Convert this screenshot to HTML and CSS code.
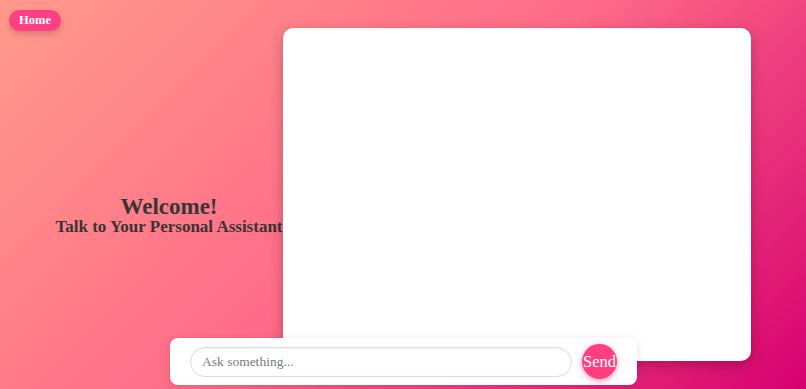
FILE: index.html
```html
<!DOCTYPE html>
<html lang="en">
<head>
<meta charset="utf-8">
<title>Personal Assistant</title>
<link rel="stylesheet" href="styles.css">
</head>
<body>
<a class="home-btn" href="#">Home</a>
<main class="layout">
  <section class="welcome">
    <h1 class="welcome-title">Welcome!</h1>
    <h2 class="welcome-sub">Talk to Your Personal Assistant</h2>
  </section>
  <section class="chat-box"></section>
</main>
<form class="input-bar">
  <input class="chat-input" type="text" placeholder="Ask something...">
  <button class="send-btn" type="button">Send</button>
</form>
</body>
</html>
```
FILE: styles.css
```css
html, body {
  margin: 0;
  padding: 0;
  height: 100%;
}
body {
  font-family: "Liberation Serif", "DejaVu Serif", serif;
  background: linear-gradient(135deg, #ff9a8b 0%, #ff6a88 50%, #d6006f 100%);
  overflow: hidden;
  position: relative;
}
.home-btn {
  position: absolute;
  left: 9px;
  top: 10px;
  width: 52px;
  height: 21px;
  border-radius: 11px;
  background: #ff3f84;
  color: #fff;
  font-weight: bold;
  font-size: 12.5px;
  text-decoration: none;
  display: flex;
  align-items: center;
  justify-content: center;
  box-shadow: 0 3px 6px rgba(0,0,0,0.18);
}
.layout {
  display: flex;
  justify-content: center;
  align-items: flex-start;
  padding-top: 28px;
}
.welcome {
  text-align: center;
  color: #383535;
  margin-top: 168px;
}
.welcome-title {
  margin: 0;
  font-size: 23px;
  line-height: 22px;
}
.welcome-sub {
  margin: 0;
  font-size: 17px;
  line-height: 18px;
}
.chat-box {
  width: 468px;
  height: 333px;
  background: #fff;
  border-radius: 10px;
  box-shadow: 0 4px 14px rgba(0,0,0,0.25);
}
.input-bar {
  position: absolute;
  left: 170px;
  top: 338px;
  width: 467px;
  height: 47px;
  box-sizing: border-box;
  background: #fff;
  border-radius: 8px;
  box-shadow: 0 2px 10px rgba(0,0,0,0.12);
  display: flex;
  align-items: center;
  padding: 0 20px;
  gap: 10px;
  margin: 0;
}
.chat-input {
  width: 382px;
  height: 30px;
  box-sizing: border-box;
  border: 1px solid #ddd;
  border-radius: 15px;
  padding: 0 11px;
  font-family: inherit;
  font-size: 13.5px;
  outline: none;
  box-shadow: inset 0 1px 3px rgba(0,0,0,0.06);
}
.chat-input::placeholder {
  color: #7a7a7a;
}
.send-btn {
  width: 35px;
  height: 35px;
  border-radius: 50%;
  border: none;
  background: #ff3f7f;
  color: #fff;
  font-family: inherit;
  font-size: 16.5px;
  padding: 0;
  box-shadow: 0 2px 6px rgba(255,60,120,0.5);
  overflow: visible;
  white-space: nowrap;
  display: flex;
  align-items: center;
  justify-content: center;
}
```
